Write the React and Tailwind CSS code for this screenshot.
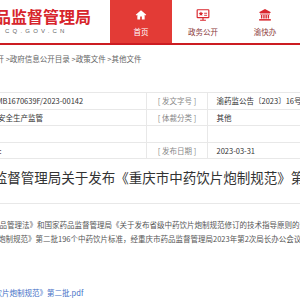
import React from "react";

const CJK = "font-['Noto_Sans_CJK_SC','Noto_Sans',sans-serif]";
const RED = "#d9272e";

function HomeIcon() {
  return (
    <svg viewBox="0 0 24 24" className="w-[12px] h-[12px]" fill="#fff">
      <path d="M12 2.5 1.5 11.3l1.4 1.6 1.8-1.5V21h5.6v-6.2h3.4V21h5.6v-9.6l1.8 1.5 1.4-1.6Z" />
    </svg>
  );
}

function MonitorIcon() {
  return (
    <svg viewBox="0 0 24 24" className="w-[14px] h-[14px]" fill="none" stroke={RED} strokeWidth="2">
      <rect x="2" y="3" width="20" height="13.5" rx="1" />
      <path d="M12 16.5V20M7 21h10" />
      <path
        d="M8.5 5.8l1.2 2.5 2.7.4-2 1.9.5 2.7-2.4-1.3-2.4 1.3.5-2.7-2-1.9 2.7-.4Z"
        fill={RED}
        stroke="none"
      />
      <path d="M14 9h5M14 12.5h5" strokeWidth="1.6" />
    </svg>
  );
}

function BankIcon() {
  return (
    <svg viewBox="0 0 24 24" className="w-[14px] h-[14px]" fill={RED}>
      <path d="M12 1.5 2.5 6.8v1.7h19V6.8Z" />
      <rect x="3.5" y="9.5" width="17" height="1.6" />
      <rect x="5" y="12" width="2.4" height="6" />
      <rect x="9" y="12" width="2.4" height="6" />
      <rect x="12.8" y="12" width="2.4" height="6" />
      <rect x="16.6" y="12" width="2.4" height="6" />
      <rect x="2" y="19" width="20" height="2.6" />
    </svg>
  );
}

const navItems = [
  { label: "首页", icon: <HomeIcon />, active: true },
  { label: "政务公开", icon: <MonitorIcon /> },
  { label: "渝快办", icon: <BankIcon /> },
];

const metaRows = [
  { left: "MB1670639F/2023-00142", leftClass: "-ml-[3.6px]", label: "[ 发文字号 ]", value: "渝药监公告〔2023〕16号" },
  { left: "安全生产监管", leftClass: "-ml-[2px]", label: "[ 体裁分类 ]", value: "其他" },
  { left: "", leftClass: "", label: "", value: "" },
  { left: ":", leftClass: "-ml-[0.5px]", label: "[ 发布日期 ]", value: "2023-03-31" },
];

export default function App() {
  return (
    <div className={`w-[300px] h-[300px] overflow-hidden bg-white ${CJK}`}>
      <header className="flex h-[43px]">
        <div className="w-[110px] shrink-0 overflow-hidden">
          <div className="mt-[8px] -ml-[5px] whitespace-nowrap text-[16px] leading-[16px] font-bold text-[#d7252c]">
            品监督管理局
          </div>
          <div className="mt-[4px] ml-[5px] whitespace-nowrap font-['Liberation_Sans',sans-serif] text-[6px] leading-[6px] tracking-[3.2px] text-[#666]">
            CQ.GOV.CN
          </div>
        </div>
        <nav className="flex">
          {navItems.map((item) => (
            <div
              key={item.label}
              className={`w-[62px] shrink-0 flex flex-col items-center pt-[8px] ${
                item.active ? "bg-[#e33b36] text-white" : "text-[#8b3a3a]"
              }`}
            >
              <div className="h-[13px] flex items-center justify-center">{item.icon}</div>
              <div className="mt-[6px] text-[7.5px] leading-[9px] whitespace-nowrap">{item.label}</div>
            </div>
          ))}
        </nav>
      </header>
      <div className="h-[2px] bg-[#cc1c22]" />

      <div className="mt-[9px] -ml-[3.5px] whitespace-nowrap text-[7.5px] leading-[10px] text-[#666]">
        开 &gt;政府信息公开目录 &gt;政策文件 &gt;其他文件
      </div>

      <div className="mt-[28px] border-t border-[#e8e8e8] text-[7.5px] leading-[15.5px]">
        {metaRows.map((row, i) => (
          <div key={i} className="flex h-[16.5px] border-b border-[#e8e8e8]">
            <div className="w-[147px] shrink-0 border-r border-[#e8e8e8] overflow-hidden whitespace-nowrap text-[#333]">
              <div className={row.leftClass}>{row.left}</div>
            </div>
            <div className="w-[61px] shrink-0 border-r border-[#e8e8e8] text-center whitespace-nowrap text-[#888]">
              {row.label}
            </div>
            <div className="flex-1 pl-[8.5px] whitespace-nowrap text-[#333]">{row.value}</div>
          </div>
        ))}
      </div>

      <h1 className="mt-[7.5px] -ml-[6.2px] whitespace-nowrap text-[13.5px] leading-[20px] font-normal text-[#333]">
        监督管理局关于发布《重庆市中药饮片炮制规范》第二批的公告
      </h1>
      <div className="mt-[16.5px] h-px bg-[#e8e8e8]" />

      <div className="mt-[13.5px] text-[7.5px] leading-[14px] text-[#555] whitespace-nowrap">
        <p className="-ml-[0.5px]">品管理法》和国家药品监督管理局《关于发布省级中药饮片炮制规范修订的技术指导原则的通告》</p>
        <p className="-ml-[2px]">炮制规范》第二批196个中药饮片标准，经重庆市药品监督管理局2023年第2次局长办公会议审议通过</p>
      </div>

      <a className="block mt-[42.5px] -ml-[5.5px] whitespace-nowrap text-[7.5px] leading-[10px] text-[#3f6fc6]">
        饮片炮制规范》第二批.pdf
      </a>
    </div>
  );
}
